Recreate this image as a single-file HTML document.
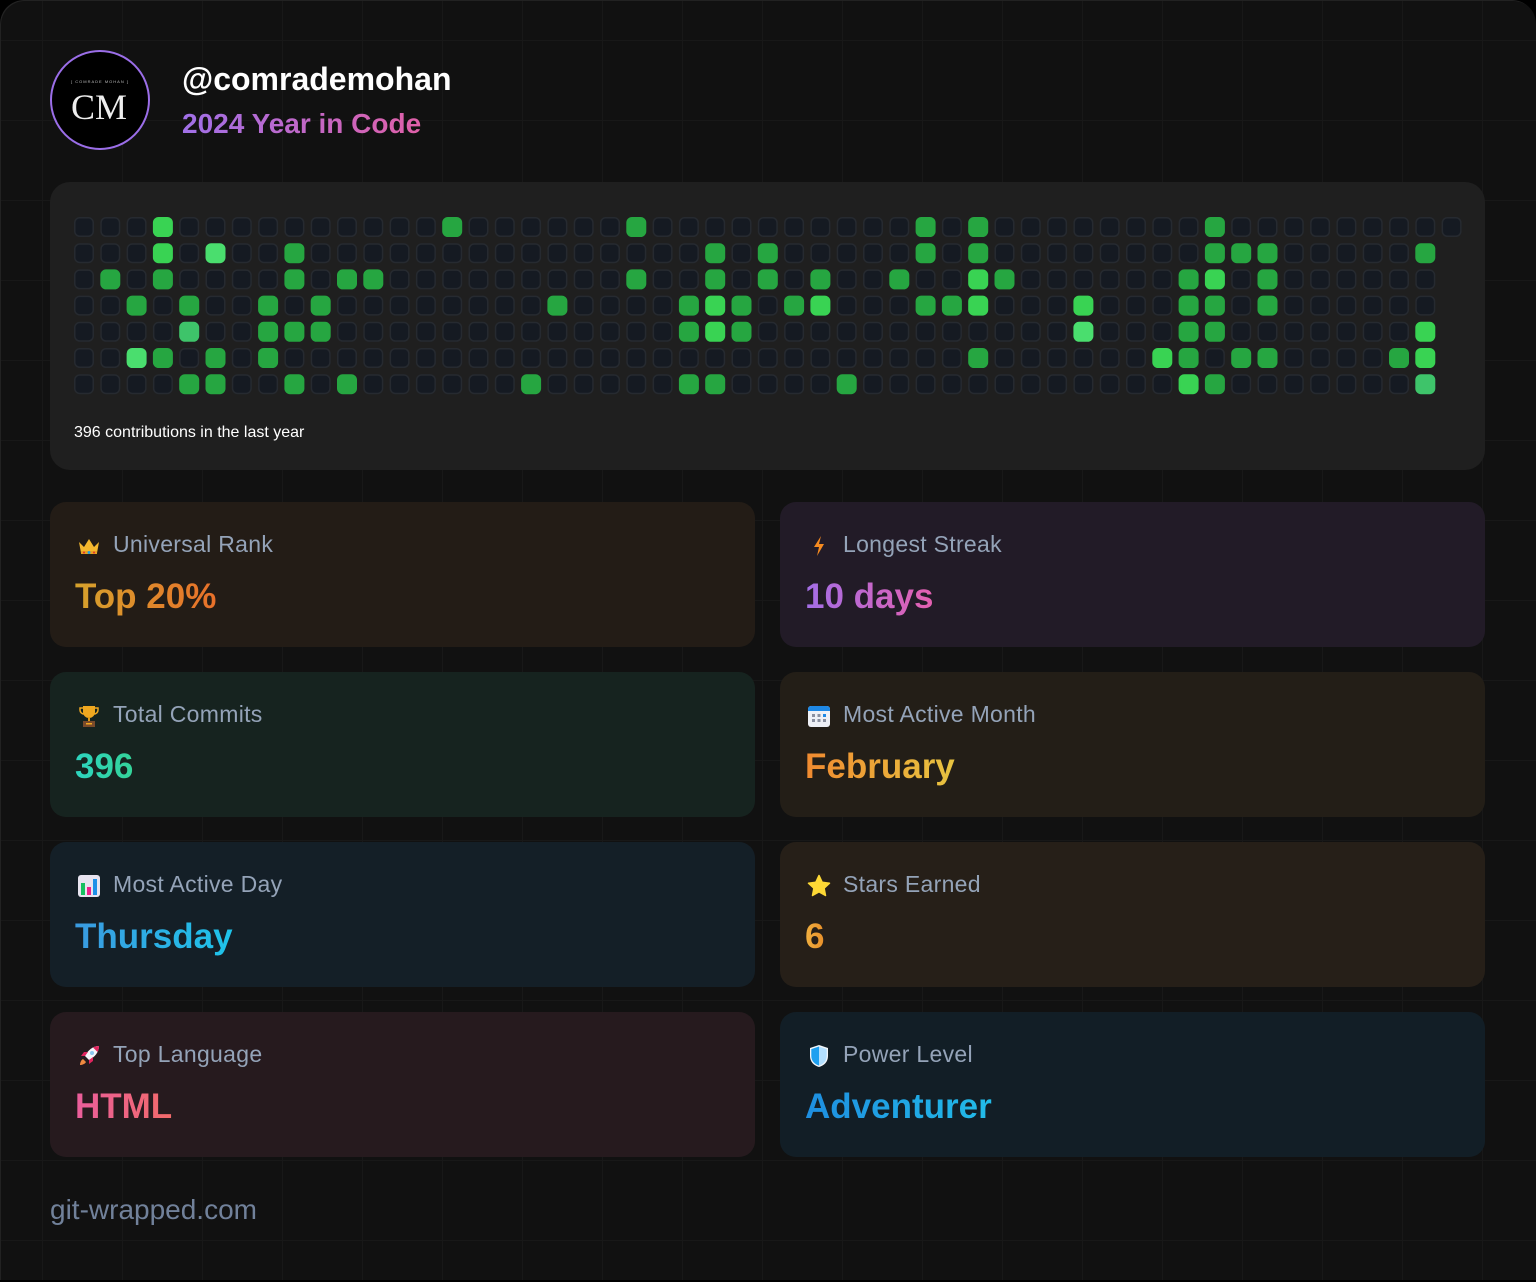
<!DOCTYPE html>
<html><head><meta charset="utf-8">
<style>
*{margin:0;padding:0;box-sizing:border-box}
body{width:1536px;height:1282px;background:#000;font-family:"Liberation Sans",sans-serif;overflow:hidden;position:relative}
.page{position:absolute;left:0;top:0;width:1536px;height:1280px;border-radius:24px 24px 0 0;background-color:#111;
background-image:linear-gradient(to right,#181818 1px,transparent 1px),linear-gradient(to bottom,#181818 1px,transparent 1px);
background-size:80px 80px;background-position:42px 40px;box-shadow:inset 1px 1px 0 #222}
.av{position:absolute;left:50px;top:50px;width:100px;height:100px;border-radius:50%;border:2px solid #9b6ee8;background:#000;color:#eee;text-align:center}
.av .s{position:absolute;top:27px;left:0;right:0;font-size:4px;letter-spacing:1px;color:#bbb}
.av .m{position:absolute;top:37px;left:-2px;right:0;font-family:"Liberation Serif",serif;font-size:36px;line-height:36px}
.name{position:absolute;left:182px;top:61px;font-size:32px;font-weight:bold;color:#fff}
.sub{position:absolute;left:182px;top:108px;font-size:28px;font-weight:bold;background:linear-gradient(90deg,#a070e8,#e060a8);-webkit-background-clip:text;background-clip:text;color:transparent}
.panel{position:absolute;left:50px;top:182px;width:1435px;height:288px;background:#1f1f1f;border-radius:20px}
.cap{position:absolute;left:74px;top:424px;font-size:16px;color:#fff}
.card{position:absolute;width:705px;height:145px;border-radius:16px}
.lab{position:absolute;left:63px;top:29px;font-size:23px;letter-spacing:0.3px;color:#94a3b8}
.ic{position:absolute;left:27px;top:32px;width:24px;height:24px}
.val{position:absolute;left:25px;top:74px;font-size:35px;font-weight:bold;-webkit-background-clip:text;background-clip:text;color:transparent;line-height:42px}
.foot{position:absolute;left:50px;top:1194px;font-size:28px;color:#71819a}
</style></head><body>
<div class="page">
<div class="av"><div class="s">[ COMRADE MOHAN ]</div><div class="m">CM</div></div>
<div class="name">@comrademohan</div>
<div class="sub">2024 Year in Code</div>
<div class="panel"></div>
<svg id="g" style="position:absolute;left:0;top:0" width="1536" height="420"></svg>
<div class="cap">396 contributions in the last year</div>

<div class="card" style="left:50px;top:502px;background:#231c16">
<svg class="ic" viewBox="0 0 24 24"><path d="M2 8l5 5 5-8 5 8 5-5-2 11H4z" fill="#f5b82e"/><rect x="4" y="17" width="16" height="3" fill="#e9a020"/><circle cx="12" cy="18.5" r="1.5" fill="#1ea0e0"/><circle cx="7" cy="18.5" r="1" fill="#e03030"/><circle cx="17" cy="18.5" r="1" fill="#e03030"/></svg>
<div class="lab">Universal Rank</div><div class="val" style="background-image:linear-gradient(90deg,#d6a22c,#e8702a)">Top 20%</div></div>

<div class="card" style="left:780px;top:502px;background:#221b27">
<svg class="ic" viewBox="0 0 24 24"><path d="M14 2L7 13h5l-2 9 7-12h-5z" fill="#f58a20"/></svg>
<div class="lab">Longest Streak</div><div class="val" style="background-image:linear-gradient(90deg,#a36ee6,#e460b0)">10 days</div></div>

<div class="card" style="left:50px;top:672px;background:#16231f">
<svg class="ic" viewBox="0 0 24 24"><path d="M6 2h12v6a6 6 0 0 1-12 0z" fill="#f0a820"/><path d="M6 4H3v2a4 4 0 0 0 4 4M18 4h3v2a4 4 0 0 1-4 4" stroke="#f0a820" stroke-width="1.5" fill="none"/><rect x="11" y="13" width="2" height="4" fill="#e09a18"/><rect x="6" y="17" width="12" height="6" fill="#7a4a2a"/><rect x="9" y="19" width="6" height="1.5" fill="#f0a820"/></svg>
<div class="lab">Total Commits</div><div class="val" style="background-image:linear-gradient(90deg,#2dd4bf,#34d399)">396</div></div>

<div class="card" style="left:780px;top:672px;background:#231e17">
<svg class="ic" viewBox="0 0 24 24"><rect x="1" y="2" width="22" height="21" rx="3" fill="#eef0f6"/><path d="M1 5a3 3 0 0 1 3-3h16a3 3 0 0 1 3 3v2H1z" fill="#1e88e5"/><g fill="#8a90a0"><rect x="5" y="10" width="3" height="3"/><rect x="10.5" y="10" width="3" height="3"/><rect x="5" y="15" width="3" height="3"/><rect x="10.5" y="15" width="3" height="3"/><rect x="16" y="15" width="3" height="3"/></g><rect x="16" y="10" width="3" height="3" fill="#1e88e5"/></svg>
<div class="lab">Most Active Month</div><div class="val" style="background-image:linear-gradient(90deg,#f08a30,#e8c440)">February</div></div>

<div class="card" style="left:50px;top:842px;background:#141f27">
<svg class="ic" viewBox="0 0 24 24"><rect x="1" y="1" width="22" height="22" rx="3" fill="#e8e4f0"/><rect x="4" y="9" width="4" height="12" fill="#18c060"/><rect x="10" y="13" width="4" height="8" fill="#f0208a"/><rect x="16" y="5" width="4" height="16" fill="#1e90e8"/></svg>
<div class="lab">Most Active Day</div><div class="val" style="background-image:linear-gradient(90deg,#3a9ae0,#1ec4ea)">Thursday</div></div>

<div class="card" style="left:780px;top:842px;background:#261f18">
<svg class="ic" viewBox="0 0 24 24"><path d="M12 1.5l3.2 6.8 7.3.9-5.4 5 1.4 7.3L12 17.9l-6.5 3.6 1.4-7.3-5.4-5 7.3-.9z" fill="#fdd835" stroke="#fdd835" stroke-linejoin="round" stroke-width="1.5"/></svg>
<div class="lab">Stars Earned</div><div class="val" style="background-image:linear-gradient(90deg,#f0b040,#e8902a)">6</div></div>

<div class="card" style="left:50px;top:1012px;background:#261a1e">
<svg class="ic" viewBox="0 0 24 24"><path d="M22 2c-6 0-11 4-14 10l4 4c6-3 10-8 10-14z" fill="#f4f4f8"/><path d="M22 2c-2 0-4 .5-6 1.5l4.5 4.5C21.5 6 22 4 22 2z" fill="#e0245e"/><circle cx="15" cy="9" r="2" fill="#8cc8f0"/><path d="M8 12l-4 0 3-4 4 0zM12 16v4l4-3v-4z" fill="#e0245e"/><path d="M6 15c-2 1-3 4-3 6 2 0 5-1 6-3z" fill="#f08a40"/></svg>
<div class="lab">Top Language</div><div class="val" style="background-image:linear-gradient(90deg,#ea5e9c,#f26a6a)">HTML</div></div>

<div class="card" style="left:780px;top:1012px;background:#121e26">
<svg class="ic" viewBox="0 0 24 24"><path d="M12 1l9 3v8c0 6-4 9.5-9 11C7 21.5 3 18 3 12V4z" fill="#f2f6fa"/><path d="M12 2.5l7.7 2.6V12c0 5-3.4 8.2-7.7 9.6z" fill="#b3e0ff"/><path d="M12 2.5L4.3 5.1V12c0 5 3.4 8.2 7.7 9.6z" fill="#1ea0f0"/></svg>
<div class="lab">Power Level</div><div class="val" style="background-image:linear-gradient(90deg,#1e8ee0,#22bce8)">Adventurer</div></div>

<div class="foot">git-wrapped.com</div>
</div>
<script>
var G={0:[3,14,21,32,34,43],1:[3,5,8,24,26,32,34,43,44,45,51],2:[1,3,8,10,11,21,24,26,28,31,34,35,42,43,45],3:[2,4,7,9,18,23,24,25,27,28,32,33,34,38,42,43,45],4:[4,7,8,9,23,24,25,38,42,43,51],5:[2,3,5,7,34,41,42,44,45,50,51],6:[4,5,8,10,17,23,24,29,42,43,51]};
var bright={"0,3":1,"1,3":1,"1,5":2,"2,43":1,"3,24":1,"3,28":1,"4,4":3,"4,24":1,"5,2":2,"2,34":1,"3,34":1,"3,38":1,"4,38":2,"4,51":1,"5,41":1,"5,51":1,"6,42":1,"6,51":3};
var s='';
for(var r=0;r<7;r++)for(var c=0;c<53;c++){
 if(c==52&&r>0)continue;
 var x=74+26.3*c,y=217+26.2*r;
 var on=G[r].indexOf(c)>=0;
 var f='#151a22',st='#262a30';
 if(on){var b=bright[r+','+c]||0;f=['#26a641','#39d353','#4ade6e','#3ec46a'][b];st=f;}
 s+='<rect x="'+(x+0.75).toFixed(2)+'" y="'+(y+0.75)+'" width="18.5" height="18.5" rx="5" fill="'+f+'" stroke="'+st+'" stroke-width="1.5"/>';
}
document.getElementById('g').innerHTML=s;
</script>
</body></html>
